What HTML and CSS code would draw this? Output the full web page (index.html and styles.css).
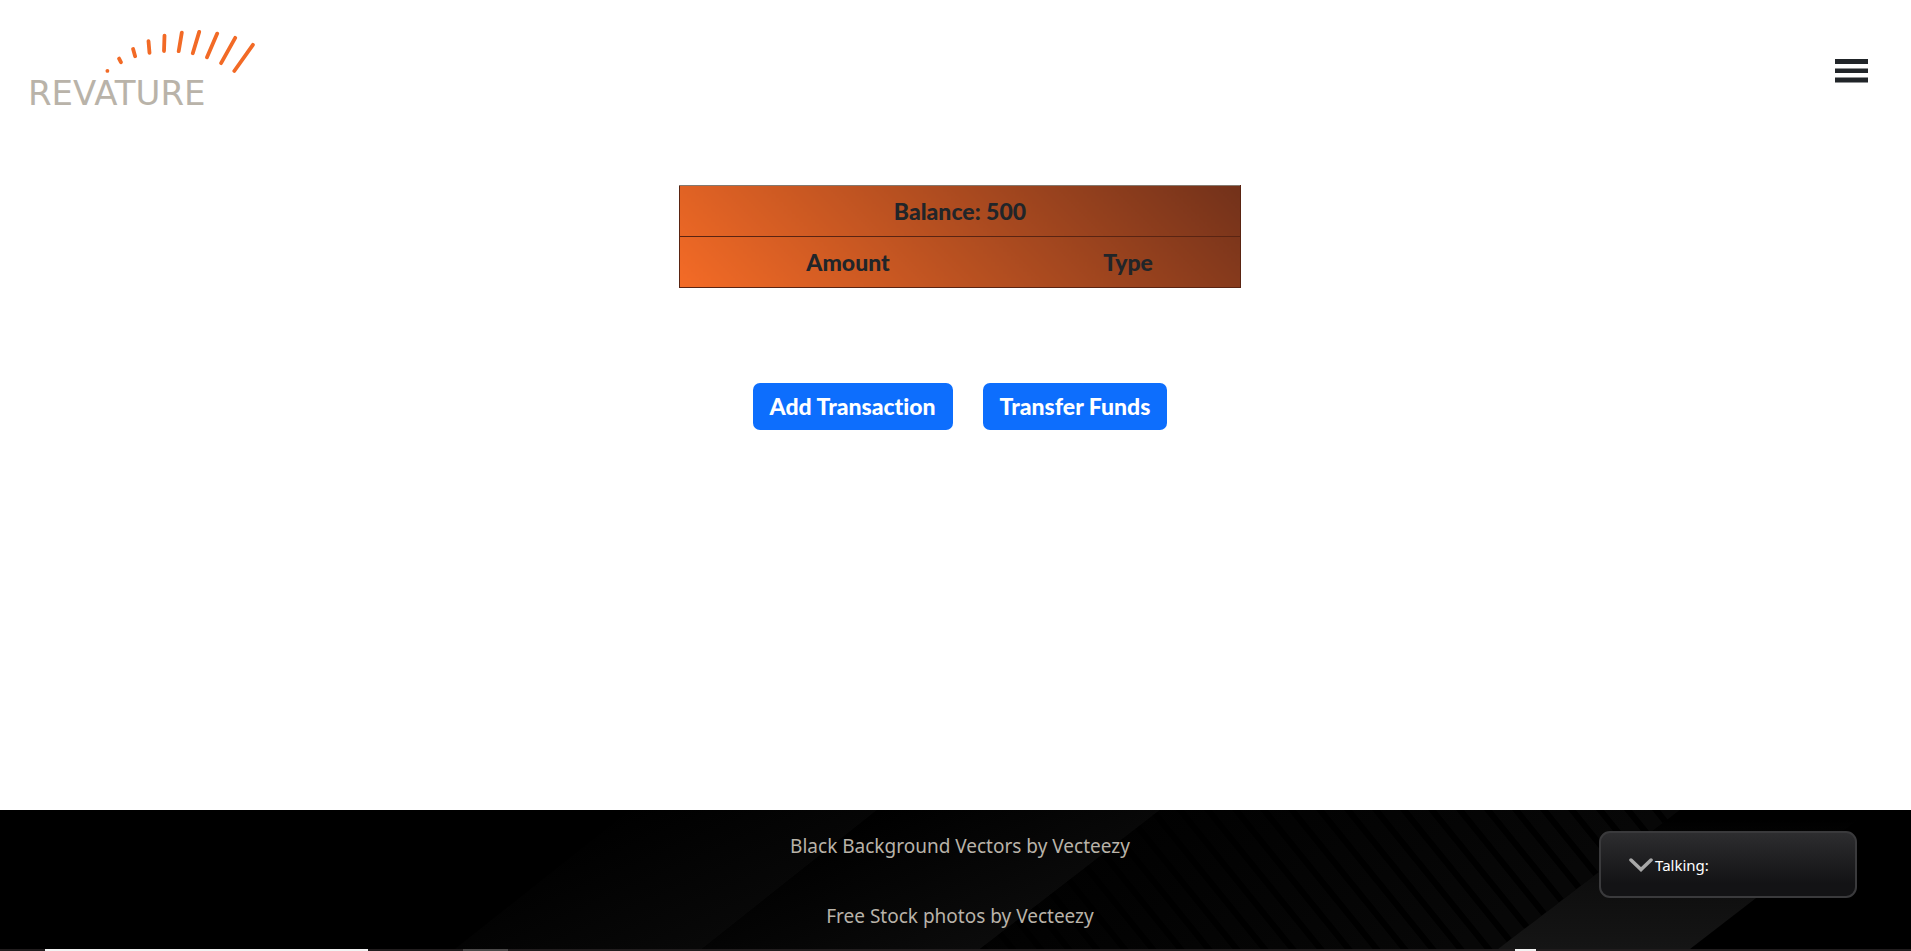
FILE: index.html
```html
<!DOCTYPE html>
<html lang="en">
<head>
<meta charset="utf-8">
<title>Revature Banking</title>
<link rel="stylesheet" href="styles.css">
</head>
<body>
<header class="topbar">
  <a class="brand" href="#" aria-label="Revature home">
    <svg class="brand-rays" viewBox="0 0 150 44" aria-hidden="true">
      <g fill="none" stroke="#f26a26" stroke-width="3.8" stroke-linecap="round">
        <path d="M2.400 40.800v.1M14.100 28.600l1.8 3.600M28.100 19l2 7.200M43.500 11.200l1 11.600M59.500 5.600l-.5 15.400M76.800 2.600l-3.100 18.600M94.200 1.900l-6.400 21.400M112.200 3.600l-10.200 23.600M130.200 7.800l-14.100 25.400M147.900 14.800l-18.600 26.200"/>
      </g>
    </svg>
    <span class="brand-name">REVATURE</span>
  </a>
  <button class="menu-button" type="button" aria-label="Open menu">
    <svg width="34" height="24" viewBox="0 0 34 24" aria-hidden="true"><path fill="#212529" d="M0 0h33v5H0zM0 9.500h33v4.500H0zM0 18.500h33v5H0z"/></svg>
  </button>
</header>

<main class="content">
  <table class="ledger">
    <thead>
      <tr><th colspan="2">Balance: 500</th></tr>
      <tr><th class="col-amount" scope="col">Amount</th><th scope="col">Type</th></tr>
    </thead>
  </table>
  <div class="actions">
    <button class="btn" type="button">Add Transaction</button>
    <button class="btn" type="button">Transfer Funds</button>
  </div>
</main>

<footer class="footer">
  <svg class="footer-art" viewBox="0 0 1911 139" preserveAspectRatio="none" aria-hidden="true">
    <defs>
      <linearGradient id="wedge" gradientUnits="userSpaceOnUse" x1="620" y1="0" x2="690" y2="160"><stop offset="0" stop-color="#000"/><stop offset="1" stop-color="#090909"/></linearGradient>
      <linearGradient id="band" gradientUnits="userSpaceOnUse" x1="930" y1="-20" x2="1000" y2="140"><stop offset="0" stop-color="#000"/><stop offset="1" stop-color="#0c0c0c"/></linearGradient>
      <linearGradient id="beam" gradientUnits="userSpaceOnUse" x1="0" y1="10" x2="0" y2="139"><stop offset="0" stop-color="#000"/><stop offset=".5" stop-color="#0e0e0e"/><stop offset="1" stop-color="#151515"/></linearGradient>
      <linearGradient id="fade" gradientUnits="userSpaceOnUse" x1="1140" y1="0" x2="1300" y2="240"><stop offset="0" stop-color="#010101"/><stop offset="1" stop-color="#070707"/></linearGradient>
      <pattern id="lines" width="28" height="139" patternUnits="userSpaceOnUse" patternTransform="skewX(39)"><path d="M0 0h8v139H0z" fill="#000"/></pattern>
    </defs>
    <path fill="url(#wedge)" d="M455 139 630 0H877L702 139z"/>
    <path fill="url(#band)" d="M702 139 877 0H1160L980 139z"/>
    <path fill="url(#fade)" d="M980 139 1160 0H1680L1498 139z"/>
    <path fill="url(#lines)" d="M980 139 1160 0H1680L1498 139z"/>
    <path fill="url(#beam)" d="M1498 139 1680 0H1870L1690 139z"/>
  </svg>
  <nav class="credits" aria-label="Credits">
    <a href="#">Black Background Vectors by Vecteezy</a>
    <a href="#">Free Stock photos by Vecteezy</a>
  </nav>
  <button class="talking" type="button">
    <svg width="24" height="14" viewBox="0 0 24 14" aria-hidden="true"><path d="m2 2 10 9.500L22 2" fill="none" stroke="#a8a8a8" stroke-width="3.500" stroke-linecap="round"/></svg>
    <span>Talking:</span>
  </button>
</footer>
<div class="strip" aria-hidden="true"><i class="strip-search"></i><i class="strip-task"></i><i class="strip-tray"></i></div>
</body>
</html>
```
FILE: styles.css
```css
* {
  box-sizing: border-box;
}

body {
  margin: 0;
  min-height: 100vh;
  display: flex;
  flex-direction: column;
  background: #fff;
  color: #212529;
  font-family: "Noto Sans", sans-serif;
}

button {
  font: inherit;
  cursor: pointer;
}

.topbar {
  display: flex;
  align-items: center;
  justify-content: space-between;
  padding: 30px 42px 29px 28px;
}

.brand {
  display: flex;
  flex-direction: column;
  text-decoration: none;
}

.brand-rays {
  width: 150px;
  height: 44px;
  margin-left: 77px;
}

.brand-name {
  color: #b9b3a9;
  font: 34px/38px "DejaVu Sans", sans-serif;
}

.menu-button {
  display: flex;
  padding: 0;
  border: 0;
  background: none;
}

.content {
  flex: 1;
  display: flex;
  flex-direction: column;
  align-items: center;
  gap: 95px;
  padding: 44px 0 0 9px;
  font-family: Lato, sans-serif;
  font-weight: 900;
  font-variant-ligatures: none;
}

.ledger {
  width: 562px;
  max-width: 100%;
  border-collapse: collapse;
  background: linear-gradient(45deg, #f46b26, #72311a);
  border: 1px solid #5a2412;
  border-top-color: #84796f;
  font-size: 23px;
  line-height: 34px;
}

.ledger th {
  padding: 8px;
  font-weight: 900;
}

.ledger tr + tr th {
  border-top: 1px solid #5a2412;
}

.col-amount {
  width: 60%;
}

.actions {
  display: flex;
  gap: 30px;
}

.btn {
  padding: 6px 17px;
  border: 0;
  border-radius: 7px;
  background: #0d6efd;
  color: #fff;
  font-size: 23px;
  font-variant-ligatures: none;
  line-height: 35px;
}

.footer {
  position: relative;
  display: grid;
  grid-template-columns: 1fr auto 1fr;
  background: #000;
  padding-left: 9px;
}

.footer-art {
  position: absolute;
  inset: 0;
  width: 100%;
  height: 100%;
}

.credits {
  position: relative;
  grid-column: 2;
  display: grid;
  justify-items: center;
  gap: 40px;
  padding: 21px 0 18px;
}

.credits a {
  color: #b9b3a9;
  font-size: 19px;
  line-height: 30px;
  text-decoration: none;
}

.talking {
  position: relative;
  justify-self: end;
  display: flex;
  align-items: center;
  gap: 2px;
  width: 258px;
  height: 67px;
  margin: 21px 54px 0 0;
  padding: 0 28px;
  border: 2px solid #3a3a3c;
  border-radius: 11px;
  background: linear-gradient(#2d2d2f, #131315 80%);
  color: #fff;
  font-size: 15px;
}

.strip {
  display: grid;
  grid-template-columns: 45px 323px 95px 45px 1fr 21px 375px;
  height: 2px;
  background: #211d1e;
}

.strip-search {
  grid-column: 2;
  background: #f3f3f3;
}

.strip-task {
  grid-column: 4;
  background: #4a4848;
}

.strip-tray {
  grid-column: 6;
  background: #f3f3f3;
}
```
